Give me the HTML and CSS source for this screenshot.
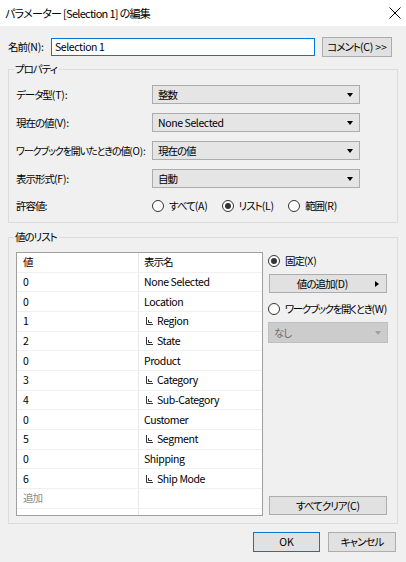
FILE: index.html
```html
<!DOCTYPE html>
<html lang="ja">
<head>
<meta charset="utf-8">
<title>パラメーター [Selection 1] の編集</title>
<link rel="stylesheet" href="styles.css">
</head>
<body>
<div class="dialog">
  <div class="titlebar">
    <span class="title">パラメーター [Selection 1] の編集</span>
    <svg class="close" width="12" height="12" viewBox="0 0 12 12"><path d="M0.5 0.5 L11.5 11.5 M11.5 0.5 L0.5 11.5" stroke="#000" stroke-width="1" fill="none"/></svg>
  </div>
  <div class="content">
    <div class="name-row">
      <span class="name-label">名前<span class="lat">(N):</span></span>
      <div class="textbox lat">Selection 1</div>
      <div class="btn comment-btn">コメント<span class="lat">(C) &gt;&gt;</span></div>
    </div>

    <div class="group props">
      <span class="group-label">プロパティ</span>
      <div class="prop-row">
        <span class="prop-label">データ型<span class="lat">(T):</span></span>
        <div class="select"><span>整数</span><i class="arrow"></i></div>
      </div>
      <div class="prop-row">
        <span class="prop-label">現在の値<span class="lat">(V):</span></span>
        <div class="select"><span class="lat">None Selected</span><i class="arrow"></i></div>
      </div>
      <div class="prop-row">
        <span class="prop-label long">ワークブックを開いたときの値<span class="lat">(O):</span></span>
        <div class="select"><span>現在の値</span><i class="arrow"></i></div>
      </div>
      <div class="prop-row">
        <span class="prop-label">表示形式<span class="lat">(F):</span></span>
        <div class="select"><span>自動</span><i class="arrow"></i></div>
      </div>
      <div class="prop-row radio-row">
        <span class="prop-label">許容値<span class="lat">:</span></span>
        <div class="radios">
          <span class="radio"><i class="dot"></i>すべて<span class="lat">(A)</span></span>
          <span class="radio checked"><i class="dot"></i>リスト<span class="lat">(L)</span></span>
          <span class="radio"><i class="dot"></i>範囲<span class="lat">(R)</span></span>
        </div>
      </div>
    </div>

    <div class="group list">
      <span class="group-label">値のリスト</span>
      <div class="list-body">
        <div class="table">
          <div class="row"><span class="c1">値</span><span class="c2 jp">表示名</span></div>
          <div class="row"><span class="c1">0</span><span class="c2">None Selected</span></div>
          <div class="row"><span class="c1">0</span><span class="c2">Location</span></div>
          <div class="row"><span class="c1">1</span><span class="c2"><svg class="tree" width="7" height="8" viewBox="0 0 7 8"><path d="M0.5 0 V7.5 H7 M2.5 3 V5.5 H6" stroke="#333" fill="none"/></svg>Region</span></div>
          <div class="row"><span class="c1">2</span><span class="c2"><svg class="tree" width="7" height="8" viewBox="0 0 7 8"><path d="M0.5 0 V7.5 H7 M2.5 3 V5.5 H6" stroke="#333" fill="none"/></svg>State</span></div>
          <div class="row"><span class="c1">0</span><span class="c2">Product</span></div>
          <div class="row"><span class="c1">3</span><span class="c2"><svg class="tree" width="7" height="8" viewBox="0 0 7 8"><path d="M0.5 0 V7.5 H7 M2.5 3 V5.5 H6" stroke="#333" fill="none"/></svg>Category</span></div>
          <div class="row"><span class="c1">4</span><span class="c2"><svg class="tree" width="7" height="8" viewBox="0 0 7 8"><path d="M0.5 0 V7.5 H7 M2.5 3 V5.5 H6" stroke="#333" fill="none"/></svg>Sub-Category</span></div>
          <div class="row"><span class="c1">0</span><span class="c2">Customer</span></div>
          <div class="row"><span class="c1">5</span><span class="c2"><svg class="tree" width="7" height="8" viewBox="0 0 7 8"><path d="M0.5 0 V7.5 H7 M2.5 3 V5.5 H6" stroke="#333" fill="none"/></svg>Segment</span></div>
          <div class="row"><span class="c1">0</span><span class="c2">Shipping</span></div>
          <div class="row"><span class="c1">6</span><span class="c2"><svg class="tree" width="7" height="8" viewBox="0 0 7 8"><path d="M0.5 0 V7.5 H7 M2.5 3 V5.5 H6" stroke="#333" fill="none"/></svg>Ship Mode</span></div>
          <div class="row"><span class="c1 placeholder">追加</span><span class="c2"></span></div>
          <div class="row"><span class="c1"></span><span class="c2"></span></div>
        </div>
        <div class="side">
          <span class="radio checked side-radio"><i class="dot"></i>固定<span class="lat">(X)</span></span>
          <div class="btn add-btn"><span class="add-text">値の追加<span class="lat">(D)</span></span><i class="right-arrow"></i></div>
          <span class="radio side-radio wb-radio"><i class="dot"></i>ワークブックを開くとき<span class="lat">(W)</span></span>
          <div class="select disabled"><span>なし</span><i class="arrow"></i></div>
          <div class="btn clear-btn">すべてクリア<span class="lat">(C)</span></div>
        </div>
      </div>
    </div>

    <div class="footer">
      <div class="btn ok-btn lat">OK</div>
      <div class="btn cancel-btn">キャンセル</div>
    </div>
  </div>
</div>
</body>
</html>
```

FILE: styles.css
```css
* { box-sizing: border-box; }
html, body { margin: 0; padding: 0; }
body {
  width: 406px;
  height: 562px;
  overflow: hidden;
  background: #f0f0f0;
  font-family: "Noto Sans CJK JP", "Noto Sans", sans-serif;
  font-size: 10.5px;
  letter-spacing: -1px;
  font-feature-settings: "palt";
  color: #000;
}
.lat { letter-spacing: -0.2px; }
.dialog { width: 406px; height: 562px; }

.titlebar {
  height: 26px;
  background: #fff;
  display: flex;
  align-items: center;
  justify-content: space-between;
  padding: 0 5px 0 5px;
}
.title { font-size: 11px; letter-spacing: -0.7px; line-height: 14px; }
.close { display: block; }

.content { padding: 11px 8px 0 8px; }

.name-row { display: flex; align-items: center; height: 20px; }
.name-label { width: 43px; line-height: 14px; white-space: nowrap; }
.textbox {
  width: 264px;
  height: 18px;
  background: #fff;
  border: 1px solid #0078d7;
  padding-left: 3px;
  line-height: 16px;
  letter-spacing: -0.4px;
}
.btn {
  background: #e1e1e1;
  border: 1px solid #adadad;
  display: flex;
  align-items: center;
  justify-content: center;
  line-height: 14px;
  white-space: nowrap;
}
.comment-btn { width: 70px; height: 20px; margin-left: 7px; }

.group {
  position: relative;
  border: 1px solid #dcdcdc;
  width: 390px;
}
.group-label {
  position: absolute;
  top: -8px;
  left: 5px;
  padding: 0 2px 0 1px;
  background: #f0f0f0;
  line-height: 14px;
}

.props { margin-top: 12px; padding: 15px 0 7px 7px; }
.prop-row { display: flex; align-items: center; height: 19px; margin-top: 9px; }
.prop-row:first-of-type { margin-top: 0; }
.prop-label { width: 136px; flex: none; line-height: 14px; white-space: nowrap; }
.prop-label.long { font-size: 10px; letter-spacing: -1.1px; }
.select {
  width: 208px;
  height: 19px;
  background: #e5e5e5;
  border: 1px solid #acacac;
  display: flex;
  align-items: center;
  justify-content: space-between;
  padding: 0 6px 0 5px;
  line-height: 14px;
}
.select .lat { letter-spacing: -0.4px; }
.arrow {
  width: 0; height: 0;
  border-left: 3.5px solid transparent;
  border-right: 3.5px solid transparent;
  border-top: 4px solid #000;
}
.radio-row { height: 18px; }
.radios { display: flex; align-items: center; }
.radio { display: flex; align-items: center; line-height: 14px; white-space: nowrap; }
.radios .radio { margin-right: 14px; }
.dot {
  width: 12px; height: 12px;
  border: 1px solid #333;
  border-radius: 50%;
  background: #fff;
  margin-right: 5px;
  position: relative;
  flex: none;
}
.checked .dot::after {
  content: "";
  position: absolute;
  left: 2px; top: 2px;
  width: 6px; height: 6px;
  border-radius: 50%;
  background: #333;
}

.list { margin-top: 14px; padding: 14px 0 7px 7px; }
.list-body { display: flex; }
.table {
  width: 247px;
  height: 264px;
  background: #fff;
  border: 1px solid #a0a0a0;
  overflow: hidden;
}
.row {
  display: grid;
  grid-template-columns: 122px 1fr;
  height: 19.67px;
  border-bottom: 1px solid #f0f0f0;
}
.c1, .c2 { display: flex; align-items: center; line-height: 14px; white-space: nowrap; }
.c1 { padding-left: 6px; border-right: 1px solid #e8e8e8; }
.c2 { padding-left: 5px; letter-spacing: -0.4px; }
.c2.jp { letter-spacing: -1px; }
.placeholder { color: #8a8a8a; }
.tree { margin: 0 4px 0 2px; flex: none; }

.side {
  width: 120px;
  margin-left: 5px;
  display: flex;
  flex-direction: column;
}
.side-radio { height: 18px; }
.add-btn {
  width: 118px; height: 19px; margin: 4px 0 0 1px;
  justify-content: space-between;
  padding-right: 7px;
}
.add-text { flex: 1; text-align: center; }
.right-arrow {
  width: 0; height: 0;
  border-top: 3.5px solid transparent;
  border-bottom: 3.5px solid transparent;
  border-left: 4px solid #000;
}
.wb-radio { margin-top: 7px; letter-spacing: -1.4px; }
.select.disabled {
  width: 120px;
  height: 21px;
  margin-top: 4px;
  background: #cccccc;
  border-color: #bfbfbf;
  color: #6d6d6d;
}
.select.disabled .arrow { border-top-color: #a0a0a0; }
.clear-btn { width: 118px; height: 19px; margin: auto 0 1px 1px; }

.footer {
  display: flex;
  justify-content: flex-end;
  margin-top: 8px;
  padding-right: 2px;
}
.ok-btn { width: 67px; height: 20px; border-color: #0078d7; letter-spacing: 0; }
.cancel-btn { width: 68px; height: 20px; margin-left: 8px; }
```
